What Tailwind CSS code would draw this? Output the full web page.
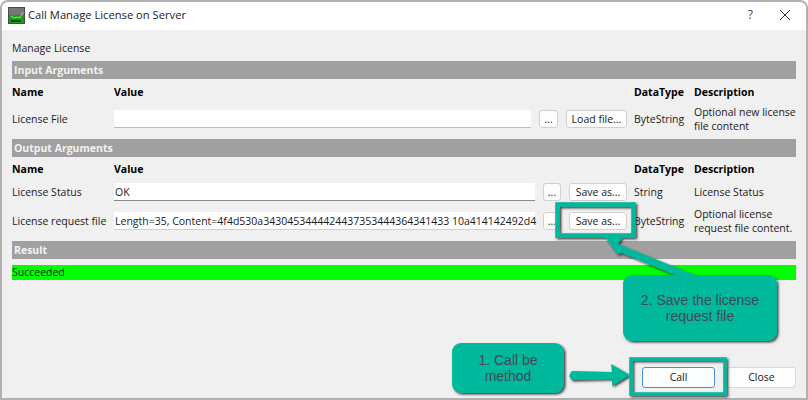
<!DOCTYPE html>
<html lang="en">
<head>
  <meta charset="UTF-8">
  <title>Call Manage License on Server</title>
  <script src="https://cdn.jsdelivr.net/npm/@tailwindcss/browser@4"></script>
</head>
<body class="bg-white">
<div class="relative w-[808px] h-[400px] overflow-hidden font-['Open_Sans',sans-serif] text-[10.5px] text-[#1a1a1a]">
  <div class="w-full h-full flex flex-col rounded-t-[8px] border-2 border-[#b0b0b0] bg-[#f0f0f0] overflow-hidden">
    <!-- title bar -->
    <div class="h-[28px] shrink-0 bg-white flex items-center pl-[6px] pr-[14px] pb-[2px]">
      <svg width="17" height="17" viewBox="0 0 17 17" class="mr-[3px]">
        <rect width="17" height="17" fill="#4a4a4a"/>
        <rect x="1" y="1" width="15" height="7" fill="#777"/>
        <rect x="1" y="8" width="15" height="8" fill="#12a012"/>
        <path d="M3 9l3 2 3-1 3 1 3-6" stroke="#9fd39f" fill="none"/>
        <rect x="3" y="13" width="10" height="2" fill="#0b500b"/>
      </svg>
      <span class="text-[11.2px] text-[#222]">Call Manage License on Server</span>
      <span class="ml-auto text-[12px] text-[#444] mr-[26px]">?</span>
      <svg width="12" height="12" viewBox="0 0 12 12" class="mr-[1px]"><path d="M1 1l10 10M11 1L1 11" stroke="#333" stroke-width="1"/></svg>
    </div>
    <!-- content -->
    <div class="flex-1 flex flex-col pl-[10px] pr-[10px]">
      <div class="h-[31px] pt-[11px] leading-[15px]">Manage License</div>

      <div class="h-[18px] bg-[#a0a0a0] text-[#f2f2f2] font-bold leading-[18px] pl-[2px]">Input Arguments</div>
      <div class="h-[27px] flex items-center font-bold text-black">
        <span class="w-[102px]">Name</span><span class="w-[520px]">Value</span><span class="w-[60px]">DataType</span><span>Description</span>
      </div>
      <div class="h-[33px] flex items-start">
        <span class="w-[102px] h-[26px] leading-[26px]">License File</span>
        <div class="w-[417px] h-[18px] mt-[4px] bg-white border-b border-[#bcbcbc]"></div>
        <button class="ml-[8px] mt-[4px] w-[19px] h-[18px] bg-[#fdfdfd] border border-[#d0d0d0] rounded-[3px] leading-none">...</button>
        <button class="ml-[8px] mt-[4px] w-[61px] h-[18px] bg-[#fdfdfd] border border-[#d0d0d0] rounded-[3px] leading-none">Load file...</button>
        <span class="w-[60px] ml-[7px] h-[26px] leading-[26px]">ByteString</span>
        <span class="w-[102px] leading-[14px] -mt-[1px] whitespace-nowrap">Optional new license<br>file content</span>
      </div>

      <div class="h-[18px] bg-[#a0a0a0] text-[#f2f2f2] font-bold leading-[18px] pl-[2px]">Output Arguments</div>
      <div class="h-[26px] flex items-center font-bold text-black">
        <span class="w-[102px]">Name</span><span class="w-[520px]">Value</span><span class="w-[60px]">DataType</span><span>Description</span>
      </div>
      <div class="h-[29px] flex items-start">
        <span class="w-[102px] h-[18px] leading-[18px]">License Status</span>
        <div class="w-[421px] h-[18px] bg-white border-b border-[#8a8a8a] pl-[1px] leading-[18px]">OK</div>
        <button class="ml-[8px] w-[18px] h-[18px] bg-[#fdfdfd] border border-[#d0d0d0] rounded-[3px] leading-none">...</button>
        <button class="ml-[8px] w-[58px] h-[18px] bg-[#fdfdfd] border border-[#d0d0d0] rounded-[3px] leading-none">Save as...</button>
        <span class="w-[60px] ml-[7px] h-[18px] leading-[18px]">String</span>
        <span class="h-[18px] leading-[18px]">License Status</span>
      </div>
      <div class="h-[29px] flex items-start">
        <span class="w-[102px] h-[18px] leading-[18px] whitespace-nowrap">License request file</span>
        <div class="w-[421px] h-[18px] bg-white border-b border-[#d0d0d0] pl-[1px] leading-[18px] whitespace-nowrap">Length=35, Content=4f4d530a3430453444424437353444364341433 10a414142492d4</div>
        <button class="ml-[8px] w-[18px] h-[18px] bg-[#fdfdfd] border border-[#d0d0d0] rounded-[3px] leading-none">...</button>
        <button class="ml-[8px] w-[58px] h-[18px] bg-[#fdfdfd] border border-[#d0d0d0] rounded-[3px] leading-none">Save as...</button>
        <span class="w-[60px] ml-[7px] h-[18px] leading-[18px]">ByteString</span>
        <span class="w-[102px] leading-[14px] -mt-[5px] whitespace-nowrap">Optional license<br>request file content.</span>
      </div>

      <div class="h-[18px] bg-[#a0a0a0] text-[#f2f2f2] font-bold leading-[18px] pl-[2px]">Result</div>
      <div class="mt-[6px] h-[15px] bg-[#00ff00] leading-[15px]">Succeeded</div>

      <div class="mt-auto mb-[10px] flex justify-end gap-[12px]">
        <button class="w-[73px] h-[21px] bg-[#fbfdff] border border-[#4a90d9] rounded-[3px] leading-none">Call</button>
        <button class="w-[69px] h-[21px] bg-[#fdfdfd] border border-[#d8d8d8] rounded-[3px] leading-none">Close</button>
      </div>
    </div>
  </div>

  <!-- annotations -->
  <svg class="absolute left-0 top-0" width="808" height="400" viewBox="0 0 808 400">
    <defs><filter id="s" x="-20%" y="-20%" width="140%" height="140%"><feDropShadow dx="1.5" dy="1.5" stdDeviation="0.8" flood-color="#222" flood-opacity="0.85"/></filter></defs>
    <g filter="url(#s)">
      <rect x="557.5" y="204.5" width="76" height="31" fill="none" stroke="#00b89c" stroke-width="4.5"/>
      <rect x="631" y="359" width="94" height="35" fill="none" stroke="#00b89c" stroke-width="3.5"/>
      <path d="M605 237l17 1-4 6 82 33h-20l-58-24-5 1z" fill="#00b89c"/>
      <rect x="623" y="275" width="154" height="66" rx="9" fill="#00b89c"/>
      <rect x="452" y="343" width="112" height="50" rx="9" fill="#00b89c"/>
      <path d="M572 371l40 1-1-8 19 11-18 11 0-7-40 1q-5-4.500 0-9z" fill="#00b89c"/>
    </g>
  </svg>
  <div class="absolute left-[623px] top-[292px] w-[154px] text-center font-['Liberation_Sans',sans-serif] text-[14px] leading-[16px] text-[#3f4a55]">2. Save the license<br>request file</div>
  <div class="absolute left-[452px] top-[352px] w-[112px] text-center font-['Liberation_Sans',sans-serif] text-[14px] leading-[16px] text-[#3f4a55]">1. Call be<br>method</div>
</div>
</body>
</html>
